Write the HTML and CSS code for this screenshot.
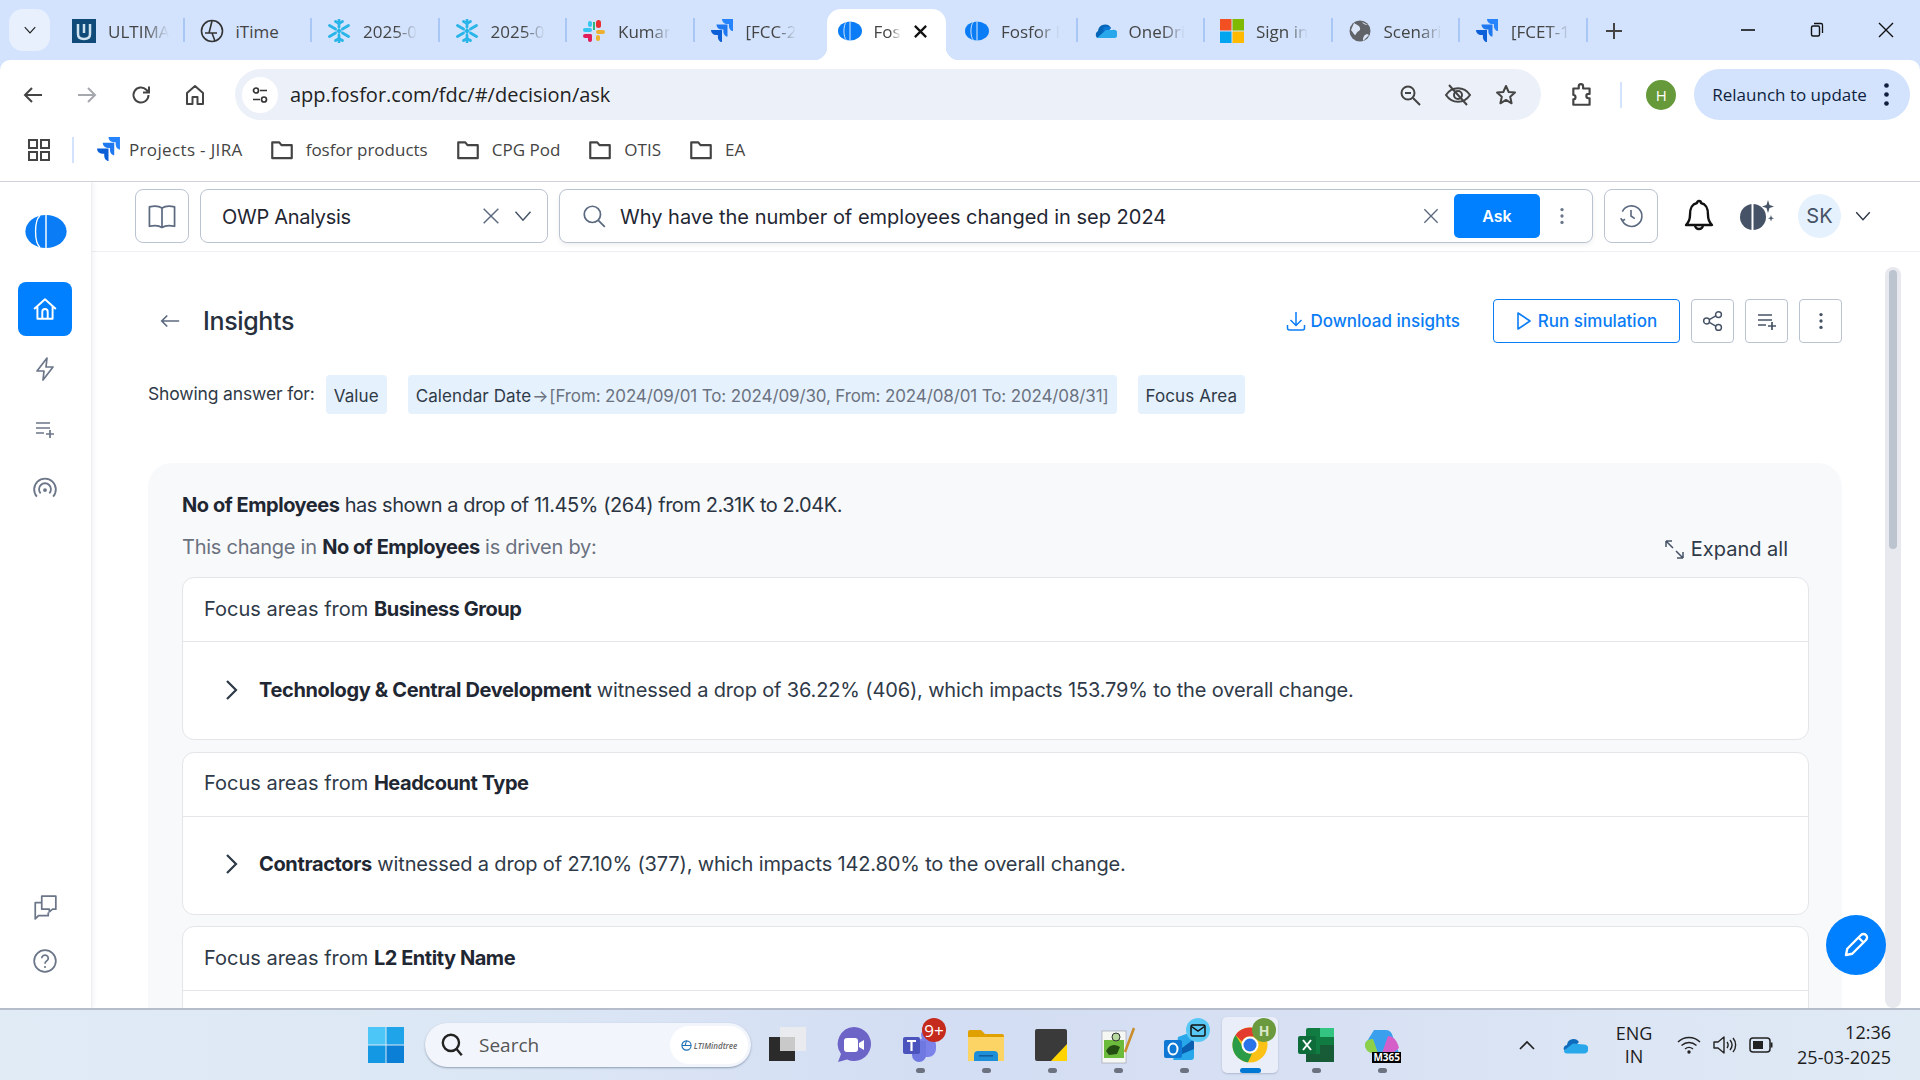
FILE: index.html
```html
<!DOCTYPE html>
<html>
<head>
    <title>Fosfor Insights</title>
    <link rel="stylesheet" href="styles.css">
</head>
<body>
    <!-- Shared icons -->
    <svg class="defs" width="0" height="0">
        <symbol id="jira" viewBox="0 0 24 24">
            <path d="M23 0H12c0 2.800 2.200 5 5 5h1.900v1.900c0 2.800 2 5 4.100 5.100z" fill="#2684ff"/>
            <path d="M17.500 5.500h-11c0 2.800 2.200 5 5 5h1.900v1.900c0 2.800 2 5 4.100 5.100z" fill="#1f78f0"/>
            <path d="M12 11H1c0 2.800 2.200 5 5 5h1.900v1.900c0 2.800 2 5 4.100 5.100z" fill="#0c5fd6"/>
        </symbol>
        <symbol id="snow" viewBox="0 0 24 24">
            <g stroke="#29b5e8" stroke-width="2.800" stroke-linecap="round" fill="none">
                <path d="M12 1v7M12 16v7M2.500 6.500l6 3.500M15.500 14l6 3.500M2.500 17.500l6-3.500M15.500 10l6-3.500"/>
                <path d="M8.500 2.500l3.500 2 3.500-2M8.500 21.500l3.500-2 3.500 2"/>
            </g>
            <path d="M12 9l3 3-3 3-3-3z" fill="#29b5e8"/>
        </symbol>
        <symbol id="fosfor" viewBox="0 0 40 32">
            <ellipse cx="20" cy="16" rx="20" ry="16" fill="#0a7cf5"/>
            <path d="M14 .8C8.500 6 8.500 26 14 31.200" stroke="#fff" stroke-width="1.300" fill="none"/>
            <rect x="19.300" y="0" width="1.400" height="32" fill="#fff"/>
        </symbol>
        <symbol id="folder" viewBox="0 0 24 24">
            <path d="M3 5h6.500l2 2.500H21v12H3z" fill="none" stroke="#444" stroke-width="2" stroke-linejoin="round"/>
        </symbol>
        <symbol id="listadd" viewBox="0 0 24 24">
            <path d="M3 6h14M3 11h14M3 16h8M17 13v8M13 17h8" fill="none" stroke="currentColor" stroke-width="1.700"/>
        </symbol>
        <symbol id="vdots" viewBox="0 0 24 24">
            <circle cx="12" cy="5" r="1.800" fill="currentColor"/>
            <circle cx="12" cy="12" r="1.800" fill="currentColor"/>
            <circle cx="12" cy="19" r="1.800" fill="currentColor"/>
        </symbol>
        <symbol id="cross" viewBox="0 0 24 24">
            <path d="M4 4l16 16M20 4L4 20" fill="none" stroke="currentColor" stroke-width="1.600"/>
        </symbol>
        <symbol id="crossbold" viewBox="0 0 24 24">
            <path d="M3 3l18 18M21 3L3 21" fill="none" stroke="currentColor" stroke-width="3.600"/>
        </symbol>
        <symbol id="chev" viewBox="0 0 24 24">
            <path d="M3 7l9 10 9-10" fill="none" stroke="currentColor" stroke-width="1.800"/>
        </symbol>
        <symbol id="chevright" viewBox="0 0 24 24">
            <path d="M8 3l9 9-9 9" fill="none" stroke="currentColor" stroke-width="2.200"/>
        </symbol>
    </svg>

    <div class="browser-head">
        <!-- Browser tabs -->
        <div class="tabstrip">
            <div class="tablist-btn"><svg width="14" height="14"><use href="#chev"/></svg></div>
            <div class="tab">
                <svg class="fav" viewBox="0 0 24 24"><rect width="24" height="24" fill="#0f4a78"/><path d="M6 5v10c0 3 2 5 6 5s6-2 6-5V5" fill="none" stroke="#cfe2f0" stroke-width="2.500"/><path d="M12 5v9" stroke="#cfe2f0" stroke-width="2.500"/></svg>
                <span class="tab-title">ULTIMA</span>
            </div>
            <div class="tab">
                <svg class="fav" viewBox="0 0 24 24"><circle cx="12" cy="12" r="10.500" fill="none" stroke="#333" stroke-width="1.600"/><path d="M12 2L9 14h8M15 22l-3-8H5" fill="none" stroke="#333" stroke-width="1.600"/></svg>
                <span class="tab-title tab-title-full">iTime</span>
            </div>
            <div class="tab"><svg class="fav"><use href="#snow"/></svg><span class="tab-title">2025-0</span></div>
            <div class="tab"><svg class="fav"><use href="#snow"/></svg><span class="tab-title">2025-0</span></div>
            <div class="tab">
                <svg class="fav" viewBox="0 0 24 24"><rect x="1" y="9" width="9" height="4" rx="2" fill="#36c5f0"/><rect x="6" y="2" width="4" height="6" rx="2" fill="#36c5f0"/><rect x="14" y="1" width="5" height="8" rx="2.500" fill="#ea2f33"/><rect x="14" y="11" width="9" height="4" rx="2" fill="#ecb22e"/><rect x="14" y="16" width="4" height="6" rx="2" fill="#ecb22e"/><rect x="1" y="15" width="9" height="4" rx="2" fill="#e01e5a"/><rect x="6" y="15" width="4" height="8" rx="2" fill="#e01e5a"/><rect x="11" y="3" width="2" height="8" fill="#2eb67d"/></svg>
                <span class="tab-title">Kumar</span>
            </div>
            <div class="tab"><svg class="fav"><use href="#jira"/></svg><span class="tab-title">[FCC-2</span></div>
            <div class="tab tab-active">
                <svg class="fav"><use href="#fosfor"/></svg>
                <span class="tab-title">Fos</span>
                <svg class="tab-close" width="15" height="15"><use href="#crossbold"/></svg>
            </div>
            <div class="tab"><svg class="fav"><use href="#fosfor"/></svg><span class="tab-title">Fosfor I</span></div>
            <div class="tab">
                <svg class="fav" viewBox="0 0 24 24"><path d="M5 12a7 7 0 0 1 13-3l-8 7-6 3a4.500 4.500 0 0 1 1-7z" fill="#0364b8"/><path d="M10 9a6 6 0 0 1 8 0l-7 8z" fill="#0a78d4"/><path d="M4 19l9-8 6 0a4 4 0 0 1 3 8z" fill="#28a8ea"/></svg>
                <span class="tab-title">OneDri</span>
            </div>
            <div class="tab">
                <svg class="fav" viewBox="0 0 24 24"><rect x="0" y="0" width="11.500" height="11.500" fill="#f25022"/><rect x="12.500" y="0" width="11.500" height="11.500" fill="#7fba00"/><rect x="0" y="12.500" width="11.500" height="11.500" fill="#00a4ef"/><rect x="12.500" y="12.500" width="11.500" height="11.500" fill="#ffb900"/></svg>
                <span class="tab-title">Sign in</span>
            </div>
            <div class="tab">
                <svg class="fav" viewBox="0 0 24 24"><circle cx="12" cy="12" r="10.500" fill="#606469"/><path d="M6 4c3 2 5 2 6 5s-3 3-4 6-3-2-5-4M15 22c0-4 1-6 4-7l2 1M14 3c1 2 3 3 6 3" fill="#dbe6f8"/></svg>
                <span class="tab-title">Scenari</span>
            </div>
            <div class="tab"><svg class="fav"><use href="#jira"/></svg><span class="tab-title">[FCET-1</span></div>
            <div class="newtab">
                <svg width="18" height="18" viewBox="0 0 18 18"><path d="M9 1v16M1 9h16" stroke="#444" stroke-width="2"/></svg>
            </div>
            <div class="winctrls">
                <svg width="16" height="16" viewBox="0 0 16 16"><path d="M1 8h14" stroke="#111" stroke-width="1.600"/></svg>
                <svg width="16" height="16" viewBox="0 0 16 16"><path d="M5 1.500h7a1.500 1.500 0 0 1 1.500 1.500v8" fill="none" stroke="#111" stroke-width="1.300"/><rect x="2.500" y="4" width="8" height="10" rx="1.500" fill="none" stroke="#111" stroke-width="1.400"/></svg>
                <svg width="16" height="16" viewBox="0 0 16 16"><path d="M1 1l14 14M15 1L1 15" stroke="#111" stroke-width="1.400"/></svg>
            </div>
        </div>

        <!-- Address bar -->
        <div class="toolbar">
            <svg class="tool" viewBox="0 0 24 24"><path d="M21 12H4M11 5l-7 7 7 7" fill="none" stroke="#444" stroke-width="2"/></svg>
            <svg class="tool" viewBox="0 0 24 24"><path d="M3 12h17M13 5l7 7-7 7" fill="none" stroke="#a5a8ad" stroke-width="2"/></svg>
            <svg class="tool" viewBox="0 0 24 24"><path d="M19.500 12a7.500 7.500 0 1 1-2.200-5.300L20 9.500M20 3.500v6h-6" fill="none" stroke="#444" stroke-width="2"/></svg>
            <svg class="tool" viewBox="0 0 24 24"><path d="M4 21V10l8-7 8 7v11h-5.500v-7h-5v7z" fill="none" stroke="#444" stroke-width="2" stroke-linejoin="round"/></svg>
            <div class="urlbar">
                <div class="site-info">
                    <svg width="20" height="20" viewBox="0 0 20 20"><circle cx="6" cy="5.500" r="2.500" fill="none" stroke="#333" stroke-width="1.700"/><path d="M10 5.500h7M3 14.500h7" stroke="#333" stroke-width="1.700"/><circle cx="14" cy="14.500" r="2.500" fill="none" stroke="#333" stroke-width="1.700"/></svg>
                </div>
                <span class="url">app.fosfor.com/fdc/#/decision/ask</span>
                <div class="url-icons">
                    <svg width="24" height="24" viewBox="0 0 24 24"><circle cx="10" cy="10" r="6.500" fill="none" stroke="#444" stroke-width="2"/><path d="M15 15l7 7M7 10h6" stroke="#444" stroke-width="2"/></svg>
                    <svg width="28" height="24" viewBox="0 0 28 24"><path d="M2 12c6-9 18-9 24 0-6 9-18 9-24 0z" fill="none" stroke="#444" stroke-width="2"/><circle cx="14" cy="12" r="4" fill="none" stroke="#444" stroke-width="2"/><path d="M5 2l18 20" stroke="#444" stroke-width="2"/></svg>
                    <svg width="24" height="24" viewBox="0 0 24 24"><path d="M12 3l2.700 6 6.300.600-4.800 4.200 1.400 6.500-5.600-3.400-5.600 3.400 1.400-6.500L3 9.600 9.300 9z" fill="none" stroke="#444" stroke-width="2" stroke-linejoin="round"/></svg>
                </div>
            </div>
            <svg class="ext" width="26" height="26" viewBox="0 0 24 24"><path d="M4 6h5V4a2 2 0 0 1 4 0v2h6v5h-1a2 2 0 0 0 0 4h1v6H4v-5a2 2 0 0 0 0-4z" fill="none" stroke="#444" stroke-width="2" stroke-linejoin="round"/></svg>
            <div class="tool-sep"></div>
            <div class="profile">H</div>
            <div class="relaunch">
                <span>Relaunch to update</span>
                <svg width="31" height="31" class="relaunch-dots"><use href="#vdots"/></svg>
            </div>
        </div>
    </div>

    <!-- Bookmarks -->
    <div class="bookmarks">
        <svg class="apps" width="22" height="22" viewBox="0 0 22 22"><g fill="none" stroke="#444" stroke-width="2"><rect x="1" y="1" width="8" height="8"/><rect x="13" y="1" width="8" height="8"/><rect x="1" y="13" width="8" height="8"/><rect x="13" y="13" width="8" height="8"/></g></svg>
        <div class="bm-sep"></div>
        <div class="bm bm-jira"><svg width="25" height="25"><use href="#jira"/></svg>Projects - JIRA</div>
        <div class="bm"><svg width="26" height="26"><use href="#folder"/></svg>fosfor products</div>
        <div class="bm"><svg width="26" height="26"><use href="#folder"/></svg>CPG Pod</div>
        <div class="bm"><svg width="26" height="26"><use href="#folder"/></svg>OTIS</div>
        <div class="bm"><svg width="26" height="26"><use href="#folder"/></svg>EA</div>
    </div>

    <div class="app">
        <!-- Left nav -->
        <aside class="sidebar">
            <svg class="logo" width="42" height="33"><use href="#fosfor"/></svg>
            <div class="nav-item nav-active">
                <svg width="26" height="26" viewBox="0 0 24 24"><path d="M2 12l10-9 10 9M5 10v11h14V10M9.500 21v-6.500a2.500 2.500 0 0 1 5 0V21" fill="none" stroke="#fff" stroke-width="1.800" stroke-linejoin="round"/></svg>
            </div>
            <div class="nav-item">
                <svg width="24" height="26" viewBox="0 0 24 24"><path d="M14 1L4 14h7l-1 9 10-13h-7z" fill="none" stroke="#6b7689" stroke-width="1.700" stroke-linejoin="round"/></svg>
            </div>
            <div class="nav-item nav-plain"><svg width="24" height="24"><use href="#listadd"/></svg></div>
            <div class="nav-item">
                <svg width="26" height="26" viewBox="0 0 24 24"><g fill="none" stroke="#6b7689" stroke-width="1.700"><path d="M4.500 19a10 10 0 1 1 15 0"/><path d="M8 16a5.500 5.500 0 1 1 8 0"/></g><circle cx="12" cy="13" r="1.800" fill="#6b7689"/></svg>
            </div>
            <div class="sidebar-spacer"></div>
            <div class="nav-item nav-small">
                <svg width="26" height="26" viewBox="0 0 24 24"><path d="M9 2h13v12h-3l-3 2.500V14H9zM9 8H3v15l3-3h9v-3" fill="none" stroke="#6b7689" stroke-width="1.600" stroke-linejoin="round"/></svg>
            </div>
            <div class="nav-item nav-small">
                <svg width="26" height="26" viewBox="0 0 24 24"><circle cx="12" cy="12" r="10" fill="none" stroke="#6b7689" stroke-width="1.600"/><path d="M9 9.500a3 3 0 1 1 4.500 2.600c-1 .6-1.500 1.200-1.500 2.400" fill="none" stroke="#6b7689" stroke-width="1.600"/><circle cx="12" cy="17.500" r="1" fill="#6b7689"/></svg>
            </div>
        </aside>

        <div class="main">
            <!-- App header -->
            <header class="topbar">
                <div class="box book-btn">
                    <svg width="32" height="32" viewBox="0 0 28 28"><path d="M14 7c-3-2-7-2-11-1v17c4-1 8-1 11 1 3-2 7-2 11-1V6c-4-1-8-1-11 1zM14 7v17" fill="none" stroke="#5c6a80" stroke-width="1.500" stroke-linejoin="round"/></svg>
                </div>
                <div class="box selectbox">
                    <span class="select-label">OWP Analysis</span>
                    <svg class="x-icon" width="22" height="22"><use href="#cross"/></svg>
                    <svg class="chev-icon" width="20" height="20"><use href="#chev"/></svg>
                </div>
                <div class="box searchbox">
                    <svg width="26" height="26" viewBox="0 0 24 24"><circle cx="10.500" cy="10.500" r="7.500" fill="none" stroke="#5c6a80" stroke-width="1.600"/><path d="M16 16l6 6" stroke="#5c6a80" stroke-width="1.600"/></svg>
                    <span class="query">Why have the number of employees changed in sep 2024</span>
                    <svg class="x-icon" width="20" height="20"><use href="#cross"/></svg>
                    <div class="ask-btn">Ask</div>
                    <svg class="more-icon" width="22" height="24"><use href="#vdots"/></svg>
                </div>
                <div class="box history-btn">
                    <svg width="26" height="26" viewBox="0 0 24 24"><path d="M3.500 15A9.500 9.500 0 1 0 4 8M2.500 14l1.500 2.500L6.500 15M12 6.500V12l3.500 2.500" fill="none" stroke="#5c6a80" stroke-width="1.500"/></svg>
                </div>
                <svg class="bell" width="30" height="34" viewBox="0 0 30 34"><path d="M15 2a2 2 0 0 1 2 2c6 1.500 7 6 7 12 0 5 1 7 4 10H2c3-3 4-5 4-10 0-6 1-10.500 7-12a2 2 0 0 1 2-2zM11 26a4 4 0 0 0 8 0" fill="none" stroke="#111" stroke-width="2.400" stroke-linejoin="round"/></svg>
                <svg class="theme" width="38" height="34" viewBox="0 0 38 34"><ellipse cx="15" cy="18" rx="13" ry="13" fill="#465366"/><rect x="13.500" y="5" width="2" height="26" fill="#fff"/><path d="M30 1l1.500 5 4.500 1.500-4.500 1.500-1.500 5-1.500-5-4.500-1.500 4.500-1.500zM33 16l.8 2.500 2.200.8-2.200.8-.8 2.400-.8-2.400-2.200-.8 2.200-.8z" fill="#465366"/></svg>
                <div class="avatar">SK</div>
                <svg class="avatar-chev" width="18" height="18"><use href="#chev"/></svg>
            </header>

            <div class="content">
                <div class="scroll-area">
                    <div class="title-row">
                        <svg width="22" height="22" viewBox="0 0 24 24"><path d="M22 12H3M9 6l-6 6 6 6" fill="none" stroke="#5c6a80" stroke-width="1.800"/></svg>
                        <h1>Insights</h1>
                        <div class="actions">
                            <div class="download">
                                <svg width="20" height="22" viewBox="0 0 20 22"><path d="M10 2v13M4.500 10l5.500 5.500 5.500-5.500M1.500 15v3a2 2 0 0 0 2 2h13a2 2 0 0 0 2-2v-3" fill="none" stroke="#0a7cf5" stroke-width="1.500"/></svg>
                                Download insights
                            </div>
                            <div class="run-btn">
                                <svg width="16" height="20" viewBox="0 0 16 20"><path d="M2 2l12 8-12 8z" fill="none" stroke="#0a7cf5" stroke-width="1.600" stroke-linejoin="round"/></svg>
                                Run simulation
                            </div>
                            <div class="icon-btn">
                                <svg width="22" height="22" viewBox="0 0 24 24"><g fill="none" stroke="#465366" stroke-width="1.600"><circle cx="5" cy="12" r="3.200"/><circle cx="18" cy="5" r="3.200"/><circle cx="18" cy="19" r="3.200"/><path d="M8 10.500l7-4M8 13.500l7 4"/></g></svg>
                            </div>
                            <div class="icon-btn"><svg width="24" height="24"><use href="#listadd"/></svg></div>
                            <div class="icon-btn"><svg width="22" height="24"><use href="#vdots"/></svg></div>
                        </div>
                    </div>

                    <div class="filter-row">
                        <span class="filter-label">Showing answer for:</span>
                        <span class="chip">Value</span>
                        <span class="chip">Calendar Date<span class="chip-muted"><span class="chip-arrow">→</span>[From: 2024/09/01 To: 2024/09/30, From: 2024/08/01 To: 2024/08/31]</span></span>
                        <span class="chip">Focus Area</span>
                    </div>

                    <section class="panel">
                        <p class="summary"><b>No of Employees</b> has shown a drop of 11.45% (264) from 2.31K to 2.04K.</p>
                        <div class="driven-row">
                            <p class="driven">This change in <b>No of Employees</b> is driven by:</p>
                            <div class="expand">
                                <svg width="21" height="21" viewBox="0 0 21 21"><path d="M2 2l7 7M2 2v6M2 2h6M19 19l-7-7M19 19v-6M19 19h-6" fill="none" stroke="#465366" stroke-width="1.500"/></svg>
                                Expand all
                            </div>
                        </div>

                        <div class="card">
                            <div class="card-head"><span>Focus areas from <b>Business Group</b></span></div>
                            <div class="card-body">
                                <svg width="24" height="24"><use href="#chevright"/></svg>
                                <span><b>Technology &amp; Central Development</b> witnessed a drop of 36.22% (406), which impacts 153.79% to the overall change.</span>
                            </div>
                        </div>
                        <div class="card">
                            <div class="card-head"><span>Focus areas from <b>Headcount Type</b></span></div>
                            <div class="card-body">
                                <svg width="24" height="24"><use href="#chevright"/></svg>
                                <span><b>Contractors</b> witnessed a drop of 27.10% (377), which impacts 142.80% to the overall change.</span>
                            </div>
                        </div>
                        <div class="card">
                            <div class="card-head"><span>Focus areas from <b>L2 Entity Name</b></span></div>
                            <div class="card-body"></div>
                        </div>
                    </section>
                </div>

                <div class="scrollbar"><div class="scroll-thumb"></div></div>
                <div class="fab">
                    <svg width="30" height="30" viewBox="0 0 24 24"><path d="M4 20l1-5L16 4a2.500 2.500 0 0 1 4 4L9 19zM14 6l4 4" fill="none" stroke="#fff" stroke-width="1.900" stroke-linejoin="round"/></svg>
                </div>
            </div>
        </div>
    </div>

    <!-- Windows taskbar -->
    <footer class="taskbar">
        <div class="task-center">
            <svg class="winlogo" width="36" height="36" viewBox="0 0 36 36"><rect width="17.500" height="17.500" fill="#4cc6f7"/><rect x="18.500" width="17.500" height="17.500" fill="#1fa4ea"/><rect y="18.500" width="17.500" height="17.500" fill="#1498e3"/><rect x="18.500" y="18.500" width="17.500" height="17.500" fill="#0b7fd6"/></svg>
            <div class="task-search">
                <svg width="26" height="26" viewBox="0 0 24 24"><circle cx="11" cy="10" r="7.500" fill="none" stroke="#222" stroke-width="2.200"/><path d="M16 15.500l5 6" stroke="#222" stroke-width="2.200"/></svg>
                <span class="search-word">Search</span>
                <div class="search-brand">
                    <svg width="11" height="11" viewBox="0 0 12 12"><circle cx="6" cy="6" r="5" fill="none" stroke="#1a6fb5" stroke-width="1.200"/><path d="M1 6h10M6 1L4.500 6" stroke="#1a6fb5" stroke-width="1.100"/></svg>
                    <i>LTIMindtree</i>
                </div>
            </div>
            <div class="task-apps">
                <div class="app-icon">
                    <svg width="38" height="36" viewBox="0 0 38 36"><rect x="11" y="0" width="26" height="24" fill="#e9ebee"/><rect x="0" y="10" width="26" height="24" fill="#2b2b2b"/><rect x="11" y="10" width="15" height="14" fill="#c9c9c9"/></svg>
                </div>
                <div class="app-icon">
                    <svg width="36" height="38" viewBox="0 0 36 38"><path d="M18 1a17 17 0 1 1-7 32.500L2 36l3-8A17 17 0 0 1 18 1z" fill="#6d64c8"/><rect x="8" y="12" width="14" height="14" rx="3" fill="#fff"/><path d="M23 17l5-3v10l-5-3z" fill="#fff"/></svg>
                </div>
                <div class="app-icon dot">
                    <svg width="36" height="36" viewBox="0 0 36 36"><circle cx="25" cy="8" r="6" fill="#7b83eb"/><rect x="16" y="10" width="18" height="20" rx="8" fill="#7b83eb"/><path d="M10 14h14v14a7 7 0 0 1-14 0z" fill="#6f78e0"/><rect x="1" y="10" width="17" height="17" rx="2" fill="#4b53bc"/><path d="M5 14h9M9.500 14v10" stroke="#fff" stroke-width="2.200"/></svg>
                    <span class="badge badge-red">9+</span>
                </div>
                <div class="app-icon dot">
                    <svg width="36" height="36" viewBox="0 0 36 36"><path d="M0 5a2 2 0 0 1 2-2h11l4 4h17a2 2 0 0 1 2 2v3H0z" fill="#e0a000"/><path d="M0 10h36v24H0z" fill="#fcd466"/><path d="M6 34v-6a4 4 0 0 1 4-4h16a4 4 0 0 1 4 4v6z" fill="#1d8fd8"/><rect x="11" y="28" width="14" height="1.600" fill="#0f5f9e"/></svg>
                </div>
                <div class="app-icon dot">
                    <svg width="34" height="32" viewBox="0 0 34 32"><rect width="32" height="32" rx="2" fill="#3a3a3a"/><path d="M32 15v17H16z" fill="#ffd400"/></svg>
                </div>
                <div class="app-icon dot">
                    <svg width="34" height="38" viewBox="0 0 34 38"><rect x="1" y="5" width="24" height="32" fill="#f5f7f2" stroke="#99a" stroke-width=".6"/><rect x="3" y="14" width="20" height="18" fill="#6cbb3c"/><path d="M5 25c3-6 8-8 14-4l-3 7-8 1z" fill="#234d13"/><circle cx="15" cy="11" r="4" fill="#b7d9a0" stroke="#333"/><path d="M24 26L33 2" stroke="#c98d2b" stroke-width="2.500"/></svg>
                </div>
                <div class="app-icon dot">
                    <svg width="40" height="36" viewBox="0 0 40 36"><path d="M14 10l16-6v26a3 3 0 0 1-3 3H9l3-8z" fill="#28a8ea"/><path d="M14 24l16-12v10l-14 6z" fill="#0a5fb0"/><rect x="0" y="13" width="18" height="18" rx="2" fill="#0f78d4"/><ellipse cx="9" cy="22" rx="4.500" ry="5.500" fill="none" stroke="#fff" stroke-width="2"/></svg>
                    <span class="badge badge-mail">
                        <svg width="16" height="13" viewBox="0 0 16 13"><rect x="1" y="1" width="14" height="11" rx="1.500" fill="none" stroke="#111" stroke-width="1.500"/><path d="M1.500 2.500L8 7l6.500-4.500" fill="none" stroke="#111" stroke-width="1.500"/></svg>
                    </span>
                </div>
                <div class="app-icon app-current">
                    <svg width="36" height="36" viewBox="0 0 36 36"><circle cx="18" cy="18" r="17.500" fill="#fbc116"/><path d="M18 .5A17.500 17.500 0 0 1 33 9.500H18a8.500 8.500 0 0 0-8 5L3.500 8A17.500 17.500 0 0 1 18 .5z" fill="#e33b2e"/><path d="M3.500 8L10 18.500a8.500 8.500 0 0 0 10 8L16 35.300A17.500 17.500 0 0 1 3.500 8z" fill="#2a9b46"/><circle cx="18" cy="18" r="8.500" fill="#fff"/><circle cx="18" cy="18" r="6.500" fill="#2a73e8"/></svg>
                    <span class="badge badge-h">H</span>
                    <span class="underline"></span>
                </div>
                <div class="app-icon dot">
                    <svg width="36" height="36" viewBox="0 0 36 36"><rect x="8" y="1" width="28" height="34" rx="2" fill="#107c41"/><rect x="22" y="1" width="14" height="9" fill="#33c481"/><rect x="22" y="18" width="14" height="9" fill="#185c37"/><rect x="8" y="27" width="28" height="8" fill="#185c37"/><rect x="0" y="9" width="18" height="18" rx="2" fill="#0e6b3a"/><path d="M5 13l8 10M13 13l-8 10" stroke="#fff" stroke-width="2"/></svg>
                </div>
                <div class="app-icon dot">
                    <svg width="36" height="34" viewBox="0 0 36 34"><path d="M10 2h12c4 0 6 3 7 7l6 16H12c-6 0-11-4-11-8 0-3 3-4 4-7z" fill="#3aa0ee"/><path d="M1 17c0-4 4-6 8-6l5 14H8c-4 0-7-4-7-8z" fill="#8dd14a"/><path d="M24 8c5 0 9 4 11 12l-6 5H18z" fill="#d45fc9"/></svg>
                    <span class="m365">M365</span>
                </div>
            </div>
        </div>
        <div class="tray">
            <svg width="16" height="10" viewBox="0 0 16 10"><path d="M1 9l7-7 7 7" fill="none" stroke="#222" stroke-width="1.700"/></svg>
            <svg width="26" height="17" viewBox="0 0 26 17"><path d="M5 8a6.500 6.500 0 0 1 12-3l-7 7-8 1a3.500 3.500 0 0 1 3-5z" fill="#0f6cbd"/><path d="M2 13.500l9-7 5 .500 6 .500a4.500 4.500 0 0 1 0 9H5a3 3 0 0 1-3-3z" fill="#28a8ea"/></svg>
            <div class="lang"><span>ENG</span><span>IN</span></div>
            <div class="tray-status">
                <svg width="24" height="18" viewBox="0 0 24 18"><g fill="none" stroke="#222" stroke-width="1.400"><path d="M1 6c6-6 16-6 22 0"/><path d="M4.500 9.500c4.500-4 10.500-4 15 0"/><path d="M8 13c2.500-2 5.500-2 8 0"/></g><circle cx="12" cy="16" r="1.700" fill="#222"/></svg>
                <svg width="24" height="20" viewBox="0 0 24 20"><g fill="none" stroke="#222" stroke-width="1.400"><path d="M1 7h4l6-5v16l-6-5H1z" stroke-linejoin="round"/><path d="M14 7c1.500 2 1.500 4 0 6M17 5c2.500 3 2.500 7 0 10M20 3c3.500 4 3.500 10 0 14"/></g></svg>
                <svg width="24" height="16" viewBox="0 0 24 16"><rect x="1" y="1" width="20" height="14" rx="3" fill="none" stroke="#222" stroke-width="1.500"/><rect x="4" y="4" width="10" height="8" fill="#222"/><rect x="21.500" y="5.500" width="2" height="5" fill="#222"/></svg>
            </div>
            <div class="clock"><span>12:36</span><span>25-03-2025</span></div>
        </div>
    </footer>
</body>
</html>
```

FILE: styles.css
```css
* {
    box-sizing: border-box;
}
html, body {
    margin: 0;
    height: 100%;
}
body {
    width: 1920px;
    height: 1080px;
    overflow: hidden;
    display: flex;
    flex-direction: column;
    font-family: "Inter", "Liberation Sans", sans-serif;
    color: #1f2733;
    background: #fff;
}
.defs {
    position: absolute;
}
svg {
    display: block;
    flex: none;
}

/* --- Browser chrome --- */
.browser-head {
    flex: none;
    background: #d3e3fd;
}
.tabstrip {
    height: 60px;
    display: flex;
    align-items: flex-end;
    padding-left: 9px;
    font-family: "Open Sans", sans-serif;
}
.tablist-btn {
    width: 41px;
    height: 42px;
    margin: 0 7px 9px 0;
    border-radius: 14px;
    background: #e9f0fd;
    display: flex;
    align-items: center;
    justify-content: center;
    color: #1a1a1a;
}
.tab {
    width: 127.500px;
    height: 51px;
    padding: 0 0 7px 15px;
    display: flex;
    align-items: center;
    gap: 12px;
    position: relative;
    font-size: 17px;
    color: #444;
}
.tab::after {
    content: "";
    position: absolute;
    right: 0;
    top: 9px;
    width: 2px;
    height: 24px;
    background: #a9c7f5;
}
.tab:nth-child(7)::after {
    display: none;
}
.tab-active {
    background: #fff;
    border-radius: 14px 14px 0 0;
    width: 119px;
    margin: 0 4.500px;
    padding-left: 11px;
}
/* concave corners at the foot of the active tab */
.tab-active::before,
.tab-active::after {
    content: "";
    position: absolute;
    top: auto;
    bottom: 0;
    width: 13px;
    height: 13px;
    background: radial-gradient(circle at 0 0, transparent 13px, #fff 13.500px);
}
.tab-active::before {
    left: -13px;
}
.tab-active::after {
    right: -13px;
    background: radial-gradient(circle at 100% 0, transparent 13px, #fff 13.500px);
}
.fav {
    width: 24px;
    height: 24px;
}
.tab-title {
    flex: none;
    white-space: nowrap;
    -webkit-mask-image: linear-gradient(to right, #000 60%, transparent);
    mask-image: linear-gradient(to right, #000 60%, transparent);
}
.tab-title-full {
    -webkit-mask-image: none;
    mask-image: none;
}
.tab-close {
    color: #111;
    margin-left: 0;
}
.newtab {
    width: 52px;
    height: 51px;
    padding: 0 0 7px 17px;
    display: flex;
    align-items: center;
}
.winctrls {
    margin-left: auto;
    align-self: flex-start;
    display: flex;
    gap: 53px;
    padding: 22px 26px 0 0;
}
.toolbar {
    height: 60px;
    display: flex;
    align-items: center;
    padding: 9px 10px 0 21px;
    gap: 29px;
    background: #fff;
    border-radius: 10px 10px 0 0;
    font-family: "Open Sans", sans-serif;
}
.tool {
    width: 24px;
    height: 24px;
    margin-right: 1px;
}
.urlbar {
    width: 1308px;
    height: 51px;
    margin-left: -2px;
    border-radius: 26px;
    background: #ecf1f9;
    display: flex;
    align-items: center;
    padding: 0 23px 0 7px;
}
.site-info {
    width: 36px;
    height: 36px;
    border-radius: 50%;
    background: #fff;
    display: flex;
    align-items: center;
    justify-content: center;
    margin-right: 12px;
}
.url {
    font-size: 20px;
    color: #222;
}
.url-icons {
    margin-left: auto;
    display: flex;
    align-items: center;
    gap: 22px;
}
.ext {
    margin-left: -1px;
}
.tool-sep {
    width: 2px;
    height: 26px;
    background: #d3e3fd;
    margin-left: -4px;
}
.profile {
    width: 30px;
    height: 30px;
    margin-left: -5px;
    border-radius: 50%;
    background: #66993a;
    color: #fff;
    font-size: 15px;
    display: flex;
    align-items: center;
    justify-content: center;
}
.relaunch {
    width: 216px;
    height: 51px;
    margin-left: -11px;
    border-radius: 26px;
    background: #d3e3fd;
    color: #0f1f3d;
    font-size: 17px;
    display: flex;
    align-items: center;
    padding-left: 18px;
    white-space: nowrap;
}
.relaunch-dots {
    margin-left: 4px;
    color: #0f1f3d;
}
.bookmarks {
    height: 62px;
    flex: none;
    display: flex;
    align-items: center;
    padding: 0 0 2px 28px;
    border-bottom: 1px solid #cfd3d9;
    font-family: "Open Sans", sans-serif;
    font-size: 17px;
    color: #444;
}
.bm-sep {
    width: 2px;
    height: 26px;
    background: #d3e3fd;
    margin: 0 22px 0 22px;
}
.bm {
    display: flex;
    align-items: center;
    gap: 11px;
    margin-right: 27px;
    white-space: nowrap;
}
.bm-jira {
    gap: 8px;
    margin-right: 26px;
    letter-spacing: .35px;
}

/* --- App shell --- */
.app {
    height: 826px;
    flex: none;
    display: flex;
    overflow: hidden;
}
.sidebar {
    width: 92px;
    flex: none;
    display: flex;
    flex-direction: column;
    align-items: center;
    border-right: 1px solid #eceef1;
    box-shadow: 2px 0 4px rgba(30, 40, 60, .05);
    z-index: 1;
    padding: 33px 0 20px 0;
    background: #fff;
}
.logo {
    margin: 0 0 34px 0;
}
.nav-item {
    width: 54px;
    height: 54px;
    margin: 0 1px 6px 0;
    display: flex;
    align-items: center;
    justify-content: center;
    color: #6b7689;
}
.nav-active {
    background: #0080ff;
    border-radius: 8px;
}
.sidebar-spacer {
    flex: 1;
}
.nav-small {
    margin-bottom: 0;
}
.main {
    flex: 1;
    min-width: 0;
    display: flex;
    flex-direction: column;
}
.topbar {
    height: 70px;
    flex: none;
    display: flex;
    align-items: center;
    padding: 0 0 2px 43px;
    border-bottom: 1px solid #eceef1;
}
.box {
    height: 54px;
    border: 1px solid #bac3d0;
    border-radius: 8px;
    display: flex;
    align-items: center;
    background: #fff;
}
.book-btn {
    width: 54px;
    justify-content: center;
    margin-right: 11px;
}
.selectbox {
    width: 348px;
    padding: 0 14px 0 21px;
    margin-right: 11px;
    font-size: 20px;
    letter-spacing: -.3px;
}
.select-label {
    flex: 1;
    padding-top: 3px;
}
.x-icon {
    color: #5c6a80;
}
.chev-icon {
    color: #465366;
    margin-left: 11px;
}
.searchbox {
    width: 1034px;
    padding: 0 19px 0 21px;
    margin-right: 11px;
    box-shadow: 0 2px 4px rgba(40, 50, 70, .08);
    font-size: 20px;
}
.query {
    flex: 1;
    margin-left: 13px;
    padding-top: 3px;
}
.ask-btn {
    width: 86px;
    height: 44px;
    margin: 0 11px 0 13px;
    background: #0080ff;
    color: #fff;
    border-radius: 5px;
    font-size: 16px;
    font-weight: 600;
    display: flex;
    align-items: center;
    justify-content: center;
}
.more-icon {
    color: #6b7689;
}
.history-btn {
    width: 54px;
    justify-content: center;
    margin-right: 26px;
}
.bell {
    margin-right: 24px;
}
.theme {
    margin-right: 22px;
}
.avatar {
    width: 43px;
    height: 44px;
    border-radius: 50%;
    background: #e5f1fd;
    display: flex;
    align-items: center;
    justify-content: center;
    font-size: 20px;
    color: #465366;
}
.avatar-chev {
    margin-left: 13px;
    color: #2a3442;
}
.content {
    flex: 1;
    min-height: 0;
    display: flex;
    position: relative;
}
.scroll-area {
    width: 1750px;
    flex: none;
    padding: 0 0 0 56px;
}
.title-row {
    height: 44px;
    margin-top: 47px;
    display: flex;
    align-items: center;
    padding-left: 11px;
}
.title-row h1 {
    margin: 0 0 0 22px;
    font-size: 25px;
    font-weight: 500;
    letter-spacing: -.35px;
    color: #27303d;
}
.actions {
    margin-left: auto;
    display: flex;
    align-items: center;
    gap: 11px;
}
.download {
    display: flex;
    align-items: center;
    gap: 5px;
    font-size: 17px;
    font-weight: 500;
    color: #0a7cf5;
    margin-right: 22px;
}
.run-btn {
    width: 187px;
    height: 44px;
    border: 1.500px solid #0a7cf5;
    border-radius: 4px;
    display: flex;
    align-items: center;
    justify-content: center;
    gap: 6px;
    font-size: 17px;
    font-weight: 500;
    color: #0a7cf5;
}
.icon-btn {
    width: 43px;
    height: 44px;
    border: 1px solid #bac3d0;
    border-radius: 4px;
    display: flex;
    align-items: center;
    justify-content: center;
    color: #465366;
}
.filter-row {
    display: flex;
    align-items: center;
    margin-top: 32px;
    gap: 21px;
    height: 39px;
    font-size: 17px;
}
.filter-label {
    color: #2f3a48;
    margin: -3px -10px 0 0;
    font-size: 17.500px;
    letter-spacing: -.15px;
}
.chip {
    height: 39px;
    padding: 2px 8px 0;
    border-radius: 4px;
    background: #e5f1fd;
    display: flex;
    align-items: center;
    white-space: nowrap;
    color: #2f3a48;
    letter-spacing: .1px;
}
.chip-muted {
    color: #6b7280;
    letter-spacing: -.13px;
}
.chip-arrow {
    margin: 0 1px;
}
.panel {
    margin-top: 49px;
    height: 700px;
    padding: 30px 33px 0 34px;
    border-radius: 24px 24px 0 0;
    background: #f8f9fb;
    font-size: 20px;
}
.summary, .driven {
    margin: 0;
}
.summary {
    line-height: 24px;
    color: #2a3442;
    letter-spacing: -.45px;
}
.driven-row {
    display: flex;
    align-items: center;
    justify-content: space-between;
    margin: 18px 0 0 0;
    height: 24px;
}
.driven {
    color: #6b7280;
    letter-spacing: -.25px;
}
.driven b, .summary b, .card b {
    color: #1f2733;
    font-weight: 700;
    letter-spacing: -.45px;
}
.expand {
    display: flex;
    align-items: center;
    gap: 6px;
    margin: 4px 21px 0 0;
    color: #2f3a48;
    font-size: 20px;
}
.card {
    margin-top: 11.500px;
    border: 1px solid #e3e5e9;
    border-radius: 12px;
    background: #fff;
    color: #2f3a48;
}
.driven-row + .card {
    margin-top: 18px;
}
.card-head {
    height: 64px;
    padding: 0 0 2px 21px;
    display: flex;
    align-items: center;
    border-bottom: 1px solid #e3e5e9;
}
.card-body {
    height: 97px;
    padding: 0 0 2px 36px;
    display: flex;
    align-items: center;
    gap: 16px;
    letter-spacing: -.15px;
    color: #2f3a48;
}
.card-body b {
    letter-spacing: -.36px;
}
.scrollbar {
    width: 16px;
    margin: 15px 0 0 43px;
    padding: 3px 4px 0;
    background: #e8e9ee;
    border-radius: 8px;
}
.scroll-thumb {
    height: 279px;
    background: #bcc4cf;
    border-radius: 4px;
}
.fab {
    position: absolute;
    left: 1734px;
    top: 663px;
    width: 60px;
    height: 60px;
    border-radius: 50%;
    background: #0080ff;
    display: flex;
    align-items: center;
    justify-content: center;
}

/* --- Taskbar --- */
.taskbar {
    height: 72px;
    flex: none;
    border-top: 2px solid #b6bdca;
    background: linear-gradient(90deg, #e1ebf6 0%, #dce7f5 25%, #d3ddf3 50%, #d8e1f3 70%, #e0eaf5 100%);
    display: flex;
    align-items: center;
    position: relative;
    font-family: "Open Sans", sans-serif;
}
.task-center {
    display: flex;
    align-items: center;
    padding-left: 368px;
}
.task-search {
    width: 326px;
    height: 44px;
    margin-left: 21px;
    padding: 0 3px 0 14px;
    border-radius: 22px;
    background: #f2f6fc;
    box-shadow: 0 1px 2px rgba(50, 70, 100, .45);
    display: flex;
    align-items: center;
    gap: 14px;
}
.search-word {
    flex: 1;
    font-size: 19px;
    color: #555;
}
.search-brand {
    width: 78px;
    height: 38px;
    border-radius: 19px;
    background: #fff;
    display: flex;
    align-items: center;
    justify-content: center;
    gap: 2px;
    font-size: 8px;
    font-weight: 600;
    color: #666;
}
.task-apps {
    display: flex;
    margin-left: 9px;
    gap: 10px;
}
.app-icon {
    width: 56px;
    height: 56px;
    display: flex;
    align-items: center;
    justify-content: center;
    position: relative;
}
.dot::after {
    content: "";
    position: absolute;
    left: 24px;
    bottom: 0;
    width: 9px;
    height: 5px;
    border-radius: 3px;
    background: #6c7280;
}
.app-current {
    background: #e9eef9;
    border-radius: 5px;
    box-shadow: 0 1px 2px rgba(50, 70, 100, .25);
}
.underline {
    position: absolute;
    left: 18px;
    bottom: 0;
    width: 21px;
    height: 5px;
    border-radius: 3px;
    background: #0078d4;
}
.badge {
    position: absolute;
    width: 24px;
    height: 24px;
    top: 1px;
    left: 30px;
    border-radius: 50%;
    display: flex;
    align-items: center;
    justify-content: center;
}
.badge-red {
    background: #c42b1c;
    color: #fff;
    font-size: 17px;
}
.badge-mail {
    background: #5ac8f5;
}
.badge-h {
    background: #6b9a3e;
    color: #d9e8c8;
    font-size: 14px;
    font-weight: 700;
    top: 1px;
    left: 30px;
}
.m365 {
    position: absolute;
    right: 9px;
    bottom: 10px;
    padding: 0 1px;
    background: #000;
    color: #fff;
    font-size: 10px;
    font-weight: 700;
    line-height: 11px;
}
.tray {
    margin-left: auto;
    padding-right: 29px;
    display: flex;
    align-items: center;
    color: #1c1c1c;
}
.tray > svg:nth-child(2) {
    margin-left: 27px;
}
.lang {
    width: 60px;
    margin-left: 16px;
    display: flex;
    flex-direction: column;
    align-items: center;
    font-size: 18px;
    line-height: 23px;
}
.tray-status {
    display: flex;
    align-items: center;
    gap: 12px;
    margin-left: 13px;
}
.clock {
    width: 112px;
    margin-left: 6px;
    display: flex;
    flex-direction: column;
    align-items: flex-end;
    font-size: 18px;
    line-height: 25px;
}
```
